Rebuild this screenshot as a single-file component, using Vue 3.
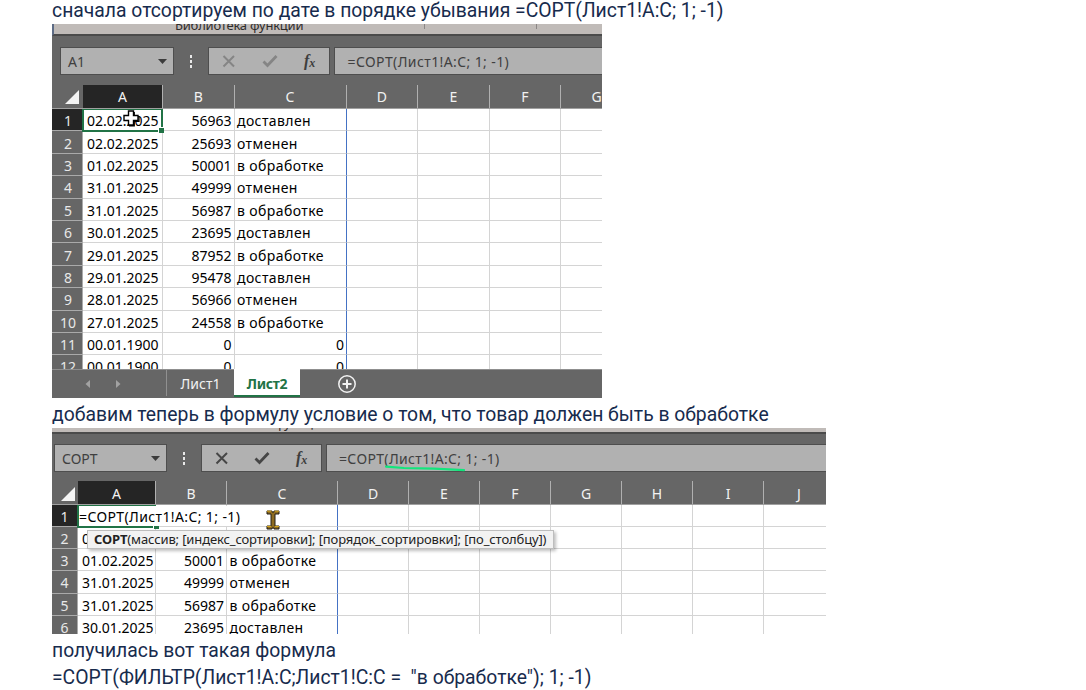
<script setup>
const first = [
  ['02.02.2025', '56963', 'доставлен'],
  ['02.02.2025', '25693', 'отменен'],
  ['01.02.2025', '50001', 'в обработке'],
  ['31.01.2025', '49999', 'отменен'],
  ['31.01.2025', '56987', 'в обработке'],
  ['30.01.2025', '23695', 'доставлен'],
  ['29.01.2025', '87952', 'в обработке'],
  ['29.01.2025', '95478', 'доставлен'],
  ['28.01.2025', '56966', 'отменен'],
  ['27.01.2025', '24558', 'в обработке'],
  ['00.01.1900', '0', '0'],
  ['00.01.1900', '0', '0'],
]
const second = [
  ['', '', ''],
  ['0', '', ''],
  ...first.slice(2, 6),
]
const sheets = [
  { id: 'one', name: 'A1', letters: 'ABCDEFG', rows: first },
  { id: 'two', name: 'СОРТ', letters: 'ABCDEFGHIJ', rows: second },
]
</script>

<template>
  <main class="page">
    <p class="line l1"><span>сначала отсортируем по дате в порядке убывания =СОРТ(Лист1!A:C; 1; -1)</span></p>
    <template v-for="s in sheets" :key="s.id">
      <section class="shot" :class="s.id">
        <div class="ribbon"><span class="group">Библиотека функций</span></div>
        <div class="bar">
          <div class="box name">
            <span>{{ s.name }}</span>
            <svg width="9" height="5" viewBox="0 0 9 5"><path d="M0 0H9L4.5 5Z" fill="#3c3c3c" /></svg>
          </div>
          <div class="dots"><i></i><i></i><i></i></div>
          <div class="box tools">
            <svg class="x" width="14" height="14" viewBox="0 0 14 14"><path d="M1.5 2L12 12.5M12 2L1.5 12.5" fill="none" stroke="currentColor" stroke-width="2" /></svg>
            <svg class="check" width="16" height="14" viewBox="0 0 16 14"><path d="M1.5 7.5L5.5 11.5L14.5 2" fill="none" stroke="currentColor" stroke-width="2.8" /></svg>
            <span class="fx">f<sub>x</sub></span>
          </div>
          <div class="box formula">
            <span>=СОРТ(Лист1!A:C; 1; -1)</span>
            <svg v-if="s.id === 'two'" class="mark" width="84" height="8" viewBox="0 0 84 8"><path d="M2 1.6L20 3L50 3.6L80 5.2" fill="none" stroke="#12e67c" stroke-width="2.2" stroke-linecap="round" /></svg>
          </div>
        </div>
        <div class="row head">
          <div class="num"><svg width="14" height="14" viewBox="0 0 14 14"><path d="M14 0V14H0Z" fill="#f4f4f4" /></svg></div>
          <div v-for="c in s.letters" :key="c" class="col" :class="{ on: c === 'A' }"><span>{{ c }}</span></div>
        </div>
        <div class="body">
          <div v-for="(r, i) in s.rows" :key="i" class="row data">
            <div class="num" :class="{ on: i === 0 }"><span>{{ i + 1 }}</span></div>
            <div v-for="(c, j) in s.letters" :key="c" class="cell" :class="['c' + j, { right: j === 1 || (j === 2 && r[j] === '0') }]"><span>{{ r[j] }}</span></div>
          </div>
          <div class="select"><i></i></div>
          <template v-if="s.id === 'two'">
            <span class="edit">=СОРТ(Лист1!A:C; 1; -1)</span>
            <svg class="ibeam" width="14" height="20" viewBox="0 0 14 20"><path d="M1 1H6V2H8V1H13V4H9V16H13V19H8V18H6V19H1V16H5V4H1Z" fill="#8d6b20" stroke="#211d16" stroke-width="1" /><path d="M1 1.2H5.5M8.5 1.2H13M1 16.4H5M9 16.4H13" stroke="#e6b21d" stroke-width="1" /></svg>
          </template>
          <svg v-else class="cross" width="18" height="18" viewBox="0 0 18 18"><path d="M6.5 2H11.5V6.5H16V11.5H11.5V16H6.5V11.5H2V6.5H6.5Z" fill="#fff" stroke="#000" stroke-width="1.4" /><path d="M12.3 3V6M17 7V12.3H12.3V16.8H7" fill="none" stroke="#000" stroke-width="1.2" /></svg>
        </div>
        <div v-if="s.id === 'two'" class="tip"><span><b>СОРТ</b>(массив; [индекс_сортировки]; [порядок_сортировки]; [по_столбцу])</span></div>
        <div v-else class="tabs">
          <div class="nav">
            <svg width="36" height="10" viewBox="0 0 36 10"><path d="M5 1V9L0.5 5ZM31 1V9L35.5 5Z" fill="#a2a2a2" /></svg>
          </div>
          <div class="tab"><span>Лист1</span></div>
          <div class="tab active"><span>Лист2</span></div>
          <svg class="plus" width="20" height="20" viewBox="0 0 20 20"><circle cx="10" cy="10" r="8.2" fill="none" stroke="#f2f2f2" stroke-width="1.5" /><path d="M10 5.5V14.5M5.5 10H14.5" stroke="#f2f2f2" stroke-width="2" /></svg>
        </div>
      </section>
      <p v-if="s.id === 'one'" class="line l2"><span>добавим теперь в формулу условие о том, что товар должен быть в обработке</span></p>
    </template>
    <p class="line l3"><span>получилась вот такая формула</span></p>
    <p class="line l4"><span>=СОРТ(ФИЛЬТР(Лист1!A:C;Лист1!C:C =&nbsp; "в обработке"); 1; -1)</span></p>
  </main>
</template>

<style>
body { background: #fff; overflow: hidden; }
</style>

<style scoped>
* { box-sizing: border-box; }
.page { height: 690px; padding-left: 52px; overflow: hidden; }
.line { margin: 0; font: 19.35px/26px Roboto, "Noto Sans", sans-serif; color: #172b4d; white-space: nowrap; }
.l1 { margin-top: -2px; height: 26px; }
.l2 { height: 30px; padding-top: 4px; }
.l3 { height: 27px; padding-top: 4px; }
.l4 { padding-top: 4px; }
.shot { position: relative; display: flex; flex-direction: column; overflow: hidden; background: #666; font-family: "Noto Sans", "Open Sans", sans-serif; font-size: 14px; color: #000; white-space: nowrap; }
.one { width: 550px; height: 374px; --cols: 31px 80px 71.5px 112px 71.6px 71.6px 71.6px 71.6px; --rh: 22.4px; }
.two { width: 774px; height: 206px; --cols: 26px 78px 71px 111px repeat(7, 71px); --rh: 22.15px; }
.ribbon { flex: none; height: 12px; overflow: hidden; background: linear-gradient(90deg, transparent 370px, #8b8786 370px, #8b8786 371px, transparent 371px, transparent 482px, #8b8786 482px, #8b8786 483px, transparent 483px) 0 0 / 100% 5px no-repeat, #c0bbb8; border-bottom: 2px solid #4b4b4b; color: #2f2d2c; }
.one .ribbon { border-left: 2px solid #5c6b85; }
.group { display: block; margin: -8px 0 0 121px; font-size: 13px; line-height: 18px; letter-spacing: -.22px; }
.two .ribbon { height: 6px; background: #c0bbb8; }
.two .group { margin: -14px 0 0 148px; }
.bar { flex: none; display: flex; height: 28px; margin-top: 11px; padding-left: 8px; }
.two .bar { margin-top: 10px; padding-left: 2px; }
.box { position: relative; display: flex; align-items: center; height: 28px; background: #b1b1b1; border: 1px solid #4e4e4e; color: #404040; }
.name { width: 114px; padding: 0 6px 0 7px; justify-content: space-between; }
.two .name { width: 113px; }
.dots { width: 34px; display: flex; flex-direction: column; align-items: center; justify-content: center; gap: 2px; }
.dots i { width: 2px; height: 3px; background: #e9e9e9; }
.tools { width: 122px; padding-left: 13px; color: #858585; }
.two .tools { width: 121px; color: #464646; }
.check { margin-left: 26px; }
.two .check { margin-left: 25px; }
.fx { margin-left: 26px; font: italic bold 16px/20px "Liberation Serif", serif; color: #3e3e3e; }
.fx sub { font-size: 12px; vertical-align: -1px; line-height: 0; }
.formula { flex: 1; margin-left: 4px; padding-left: 12.5px; border-right: 0; letter-spacing: .4px; }
.two .formula { padding-left: 12px; letter-spacing: .35px; }
.mark { position: absolute; left: 57px; top: 20px; }
.row { display: grid; grid-template-columns: var(--cols); flex: none; }
.head { height: 24px; margin-top: 10px; color: #f2f2f2; border-bottom: 1px solid #a0a0a0; }
.two .head { height: 24px; margin-top: 9px; }
.two .head span { margin-top: 2px; }
.col { display: flex; align-items: center; justify-content: center; border-right: 1px solid #b0b0b0; }
.col.on { background: #252525; }
.head .num { display: flex; align-items: flex-end; justify-content: flex-end; padding: 0 4px 4px 0; }
.two .head .num { padding: 0 3px 3px 0; }
.body { position: relative; flex: 1; min-height: 0; overflow: hidden; background: #fff; }
.data { height: var(--rh); }
.data .num { display: flex; align-items: center; justify-content: center; padding: 2px 0 0 2px; color: #e8e8e8; background: #666; border-bottom: 1px solid #aaa; border-right: 1px solid #aaa; }
.two .data .num { padding-left: 0; }
.data .num.on { background: #252525; }
.cell { display: flex; align-items: center; border-right: 1px solid #d4d4d4; border-bottom: 1px solid #d4d4d4; padding: 2px 2px 0; }
.cell.right { justify-content: flex-end; }
.c0 { padding-left: 4px; }
.c2 { padding-left: 2.5px; border-right: 1px solid #4472c4; letter-spacing: .4px; }
.c2.right { padding-right: 1px; }
.select { position: absolute; left: 30px; top: -1px; width: 81px; height: 24px; border: 2px solid #217346; }
.two .select { left: 25px; width: 79px; height: 24px; border-right: 0; }
.select i { position: absolute; right: -3px; bottom: -3px; width: 6px; height: 6px; background: #217346; border: solid #fff; border-width: 1px 0 0 1px; }
.edit { position: absolute; left: 27px; top: 1px; width: 200px; height: 20px; line-height: 22px; letter-spacing: .38px; background: #fff; }
.cross { position: absolute; left: 70px; top: 0; }
.ibeam { position: absolute; left: 214px; top: 5px; }
.tip { position: absolute; left: 35px; top: 102px; width: 467px; height: 19px; padding-left: 6px; font-size: 13px; line-height: 17px; letter-spacing: -.13px; color: #222; background: #f2f2f2; border: 1px solid #bdbdbd; box-shadow: 2px 2px 3px rgba(0, 0, 0, .25); }
.tabs { flex: none; display: flex; height: 29px; border-top: 1px solid #8f8f8f; color: #f2f2f2; }
.nav { width: 115px; padding: 9px 0 0 33px; border-right: 1px solid #909090; height: 26px; }
.nav svg { display: block; }
.tab { width: 67px; display: flex; align-items: center; justify-content: center; height: 27px; }
.tab.active { width: 66px; margin-top: -1px; padding-top: 2px; height: 28px; background: #fff; color: #217346; font-weight: 700; letter-spacing: -.3px; border-bottom: 2px solid #217346; }
.plus { margin: 4px 0 0 37px; }
</style>
